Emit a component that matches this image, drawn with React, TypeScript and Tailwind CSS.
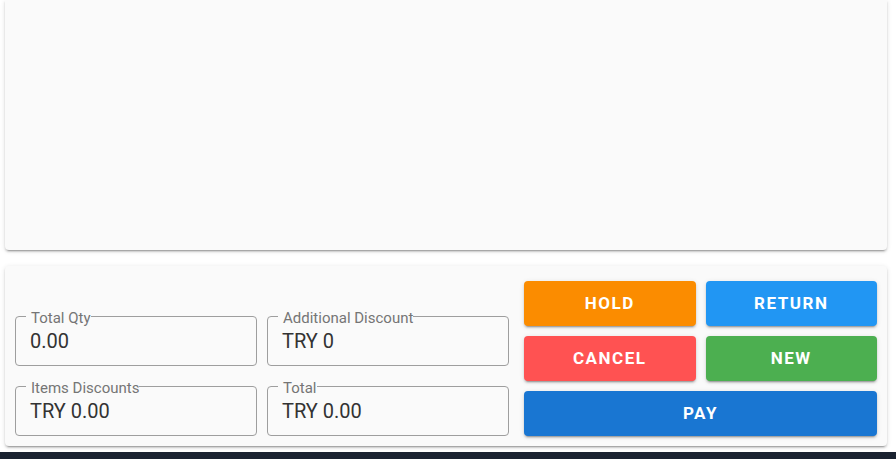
import React from 'react';

const cardShadow =
  'shadow-[0_3px_1px_-2px_rgba(0,0,0,0.2),0_2px_2px_0_rgba(0,0,0,0.14),0_1px_5px_0_rgba(0,0,0,0.12)]';

function Field({ label, value }: { label: string; value: string }) {
  return (
    <div className="relative h-[50px] rounded-[4px] border border-[#9e9e9e] pl-[14px] pt-[12px]">
      <span className="absolute -top-[7px] left-[10px] bg-[#fafafa] pl-[5px] pr-0 text-[15px] leading-[16px] text-[#757575]">
        {label}
      </span>
      <div className="text-[20px] leading-[24px] text-[#333333]">{value}</div>
    </div>
  );
}

function Btn({ label, color, wide }: { label: string; color: string; wide?: boolean }) {
  return (
    <button
      className={`h-[45px] rounded-[4px] text-[17px] font-bold uppercase tracking-[0.0892em] text-white ${color} ${wide ? 'col-span-2' : ''} shadow-[0_3px_1px_-2px_rgba(0,0,0,0.2),0_2px_2px_0_rgba(0,0,0,0.14),0_1px_5px_0_rgba(0,0,0,0.12)]`}
    >
      {label}
    </button>
  );
}

export default function App() {
  return (
    <div className="flex h-[459px] flex-col overflow-hidden bg-white font-['Roboto',sans-serif]">
      {/* Items area */}
      <div className={`ml-[5px] mr-[9px] h-[250px] shrink-0 rounded-b-[4px] bg-[#fafafa] ${cardShadow}`}></div>

      {/* Totals + actions */}
      <div className={`ml-[5px] mr-[9px] mt-[16px] flex h-[180px] shrink-0 rounded-[4px] bg-[#fafafa] px-[10px] pb-[10px] pt-[15px] ${cardShadow}`}>
        <div className="grid w-[494px] shrink-0 grid-cols-2 content-end gap-x-[10px] gap-y-[20px]">
          <Field label="Total Qty" value="0.00" />
          <Field label="Additional Discount" value="TRY 0" />
          <Field label="Items Discounts" value="TRY 0.00" />
          <Field label="Total" value="TRY 0.00" />
        </div>
        <div className="ml-[15px] grid flex-1 grid-cols-2 gap-[10px]">
          <Btn label="Hold" color="bg-[#fb8c00]" />
          <Btn label="Return" color="bg-[#2196f3]" />
          <Btn label="Cancel" color="bg-[#ff5252]" />
          <Btn label="New" color="bg-[#4caf50]" />
          <Btn label="Pay" color="bg-[#1976d2]" wide />
        </div>
      </div>

      <div className="mt-[6px] flex-1 bg-[#1a2230]"></div>
    </div>
  );
}
